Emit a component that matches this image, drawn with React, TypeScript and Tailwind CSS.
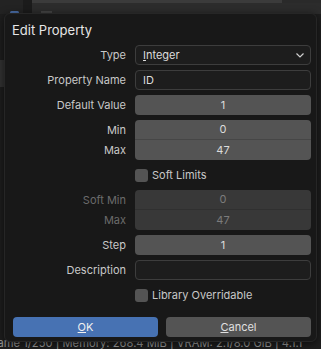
import React from "react";

function Label({ children, dim }: { children: React.ReactNode; dim?: boolean }) {
  return (
    <div className={`flex h-[20px] items-center justify-end text-[11px] ${dim ? "text-[#6b6b6b]" : "text-[#c8c8c8]"}`}>
      {children}
    </div>
  );
}

function NumField({ value, dim }: { value: string; dim?: boolean }) {
  return (
    <div
      className={`flex h-[20px] items-center justify-center rounded-[4px] text-[11px] ${
        dim ? "bg-[#383838] text-[#7c7c7c]" : "bg-[#545454] text-[#dcdcdc]"
      }`}
    >
      {value}
    </div>
  );
}

function Check({ label }: { label: string }) {
  return (
    <div className="flex h-[20px] items-center gap-[4px]">
      <div className="h-[13px] w-[13px] rounded-[3px] bg-[#545454]" />
      <span className="text-[11px] text-[#c8c8c8]">{label}</span>
    </div>
  );
}

export default function App() {
  return (
    <div
      className="relative h-[349px] w-[321px] overflow-hidden bg-[#1e1e1e]"
      style={{ fontFamily: "Inter, 'Noto Sans', sans-serif" }}
    >
      {/* background editor chrome */}
      <div className="flex h-[14px]">
        <div className="w-[23px] bg-[#232323]" />
        <div className="w-[9px] bg-[#1b1b1b]" />
        <div className="flex flex-1 flex-col">
          <div className="flex h-[3px]">
            <div className="flex-1 bg-[#3b3b3b]" />
            <div className="w-[39px] bg-[#2a2a2a]" />
          </div>
          <div className="flex-1 bg-[#2c2c2c]" />
        </div>
      </div>
      <div className="absolute left-[0px] top-[60px] h-[27px] w-[4px] bg-[#333333]" />
      <div className="absolute left-[10px] top-[11px] h-[3px] w-[9px] rounded-[2px] bg-[#4a6ea8]" />
      <div className="absolute left-[41px] top-[11px] h-[3px] w-[11px] bg-[#444444]" />

      {/* status bar */}
      <div className="absolute left-[-13px] top-[336px] whitespace-nowrap text-[11.2px] leading-[14px] text-[#9a9a9a]">
        Frame 1/250 | Memory: 268.4 MiB | VRAM: 2.1/8.0 GiB | 4.1.1
      </div>

      {/* dialog */}
      <div className="absolute left-[4px] top-[13px] flex h-[329px] w-[313px] flex-col rounded-[6px] border border-[#262626] bg-[#181818] pb-[4px] pl-[7px] pr-[5px] pt-[8px] shadow-[0_2px_8px_rgba(0,0,0,0.6)]">
        <div className="h-[16px] text-[13px] leading-[16px] text-[#e6e6e6]">Edit Property</div>

        <div className="mt-[7px] grid grid-cols-[114px_176px] gap-x-[9px] gap-y-[5px]">
          <Label>Type</Label>
          <div className="flex h-[20px] items-center justify-between rounded-[4px] border border-[#3d3d3d] bg-[#1d1d1d] pl-[7px] pr-[6px] text-[11px] text-[#dcdcdc]">
            <span>
              <u>I</u>nteger
            </span>
            <svg width="8" height="5" viewBox="0 0 8 5">
              <polyline points="0.5,0.5 4,4 7.5,0.5" fill="none" stroke="#cfcfcf" strokeWidth="1.2" />
            </svg>
          </div>

          <Label>Property Name</Label>
          <div className="flex h-[20px] items-center rounded-[4px] border border-[#3d3d3d] bg-[#1d1d1d] pl-[7px] text-[11px] text-[#dcdcdc]">
            ID
          </div>

          <Label>Default Value</Label>
          <NumField value="1" />

          <div className="flex flex-col">
            <Label>Min</Label>
            <Label>Max</Label>
          </div>
          <div className="flex flex-col overflow-hidden rounded-[4px]">
            <div className="flex h-[20px] items-center justify-center border-b border-[#464646] bg-[#545454] text-[11px] text-[#dcdcdc]">
              0
            </div>
            <div className="flex h-[20px] items-center justify-center bg-[#545454] text-[11px] text-[#dcdcdc]">
              47
            </div>
          </div>

          <div />
          <Check label="Soft Limits" />

          <div className="flex flex-col">
            <Label dim>Soft Min</Label>
            <Label dim>Max</Label>
          </div>
          <div className="flex flex-col overflow-hidden rounded-[4px]">
            <div className="flex h-[20px] items-center justify-center border-b border-[#303030] bg-[#383838] text-[11px] text-[#7c7c7c]">
              0
            </div>
            <div className="flex h-[20px] items-center justify-center bg-[#383838] text-[11px] text-[#7c7c7c]">
              47
            </div>
          </div>

          <Label>Step</Label>
          <NumField value="1" />

          <Label>Description</Label>
          <div className="h-[20px] rounded-[4px] border border-[#3d3d3d] bg-[#1d1d1d]" />

          <div />
          <Check label="Library Overridable" />
        </div>

        <div className="mt-[12px] grid grid-cols-2 gap-[8px] pl-[1px]">
          <div className="flex h-[20px] items-center justify-center rounded-[4px] bg-[#4772b3] text-[11px] text-[#f0f0f0]">
            <span>
              <u>O</u>K
            </span>
          </div>
          <div className="flex h-[20px] items-center justify-center rounded-[4px] bg-[#545454] text-[11px] text-[#e0e0e0]">
            <span>
              <u>C</u>ancel
            </span>
          </div>
        </div>
      </div>
    </div>
  );
}
